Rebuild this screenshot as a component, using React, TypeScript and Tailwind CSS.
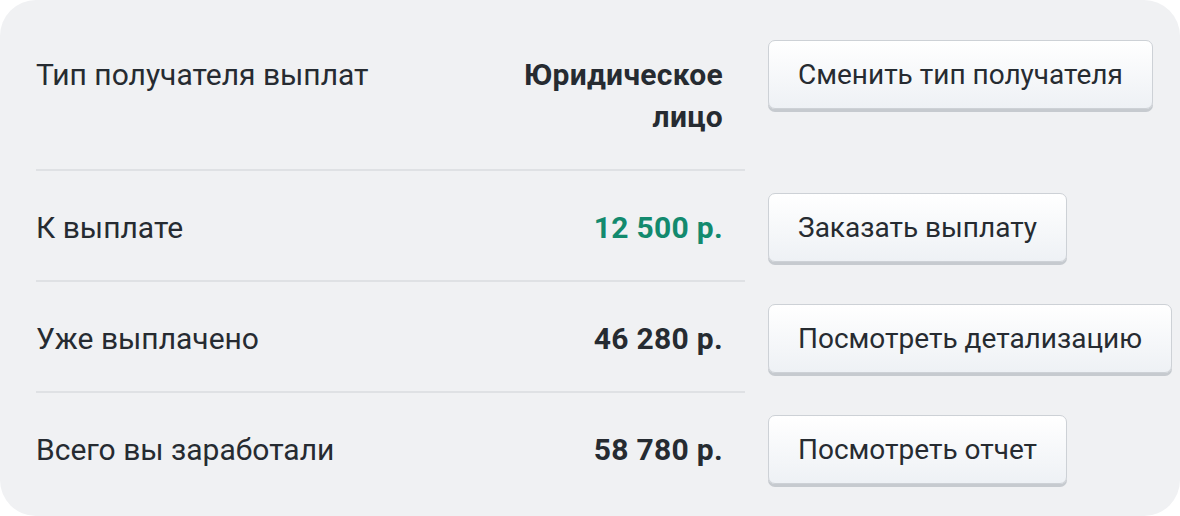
const rows = [
  { label: "Тип получателя выплат", value: "Юридическое лицо", action: "Сменить тип получателя", accent: false },
  { label: "К выплате", value: "12 500 р.", action: "Заказать выплату", accent: true },
  { label: "Уже выплачено", value: "46 280 р.", action: "Посмотреть детализацию", accent: false },
  { label: "Всего вы заработали", value: "58 780 р.", action: "Посмотреть отчет", accent: false },
];

export default function App() {
  return (
    <div className="h-[516px] w-[1180px] bg-white font-['Roboto',sans-serif] text-[30px] text-[#262b31]">
      <div className="flex h-full flex-col rounded-[36px] bg-[#f0f1f3] pl-[36px] pt-[18px]">
        {rows.map((row, i) => (
          <div key={row.label} className="flex items-start">
            {/* label + value */}
            <div
              className={`flex w-[709px] shrink-0 pb-[31px] pt-[36px] leading-[42px] ${
                i < rows.length - 1 ? "border-b-2 border-[#dfe1e4]" : ""
              }`}
            >
              <div className="flex-1">{row.label}</div>
              <div
                className={`w-[236px] pr-[22px] text-right font-bold tracking-[0.3px] ${
                  row.accent ? "text-[#138a6e]" : ""
                }`}
              >
                {row.value}
              </div>
            </div>

            {/* action */}
            <button className="ml-[23px] mt-[22px] h-[69px] whitespace-nowrap rounded-[7px] border border-[#cdd1d6] bg-gradient-to-b from-white to-[#eef1f5] px-[29px] text-[28px] text-[#262b31] shadow-[0_3px_0_#c6cacf]">
              {row.action}
            </button>
          </div>
        ))}
      </div>
    </div>
  );
}
